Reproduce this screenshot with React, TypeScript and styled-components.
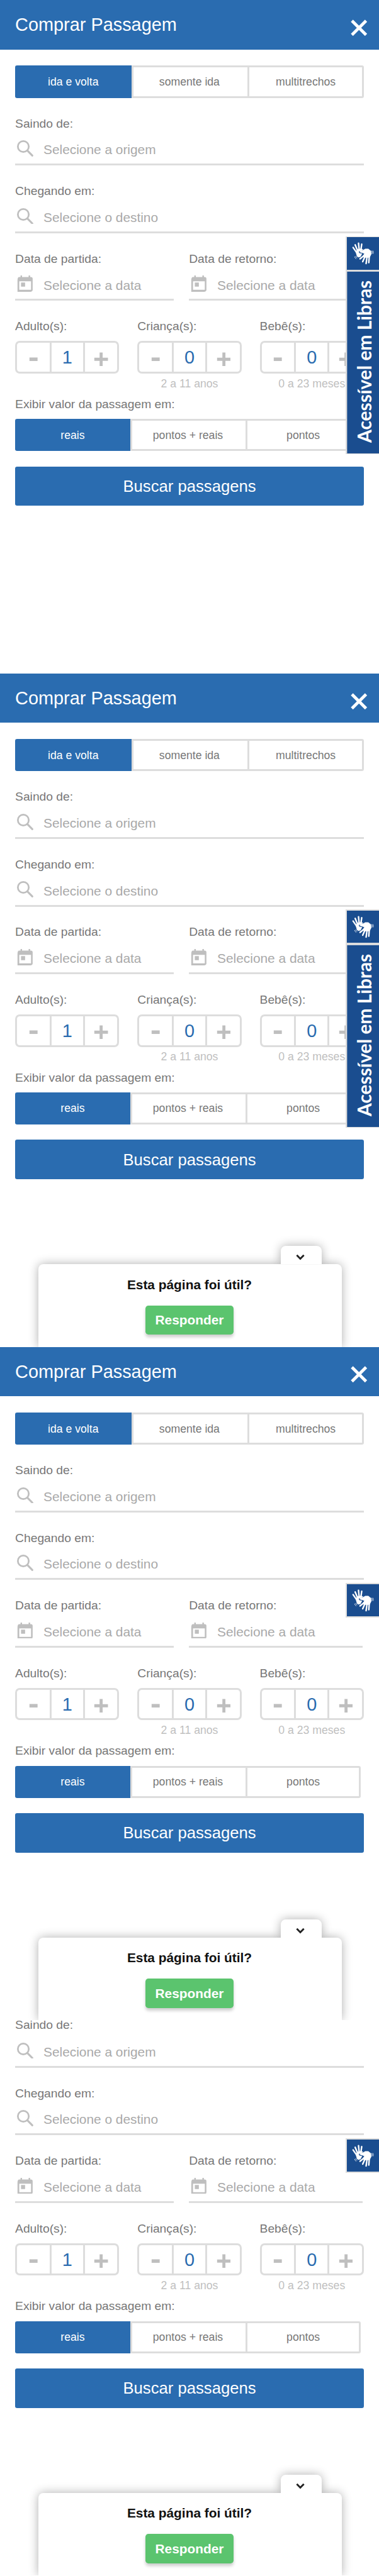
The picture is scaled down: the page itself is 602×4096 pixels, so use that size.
import React from "react";
import styled, { createGlobalStyle } from "styled-components";

const u = (n: number) => `${Math.round(n * 80266.7) / 100000}px`;

const blue = "#2a6cb0";
const navy = "#1a4d8f";
const line = "#dddddd";
const muted = "#bfbfbf";

const GlobalStyle = createGlobalStyle`
  *, *::before, *::after { box-sizing: border-box; }
  body { margin: 0; background: #fff; font-family: "Liberation Sans", Arial, sans-serif; }
  button { font-family: inherit; padding: 0; margin: 0; }
`;

const Page = styled.main`
  width: 602px;
  height: 4096px;
  overflow: hidden;
  display: flex;
  flex-direction: column;
`;

const Screen = styled.section<{ $height: number }>`
  position: relative;
  flex: none;
  width: 100%;
  height: ${(p) => u(p.$height)};
  overflow: hidden;
  background: #fff;
`;

const Header = styled.header`
  height: ${u(98)};
  background: ${blue};
  display: flex;
  align-items: center;
  justify-content: space-between;
  padding: 0 ${u(23)} 0 ${u(30)};
`;

const Title = styled.h1`
  margin: ${u(2)} 0 0;
  color: #fff;
  font-size: ${u(36)};
  font-weight: 400;
  line-height: ${u(42)};
`;

const CloseButton = styled.button`
  margin-top: ${u(12)};
  width: ${u(33)};
  height: ${u(33)};
  border: 0;
  background: none;
  svg { display: block; width: 100%; height: 100%; }
`;

const Form = styled.form<{ $scrolled: boolean }>`
  padding: ${(p) => (p.$scrolled ? "0" : u(32))} ${u(30)} 0;
  display: flex;
  flex-direction: column;
`;

const Segments = styled.div<{ $width: number; $gap: number }>`
  display: grid;
  grid-template-columns: repeat(3, 1fr);
  width: ${(p) => u(p.$width)};
  height: ${u(64)};
  margin-top: ${(p) => u(p.$gap)};
`;

const Segment = styled.button<{ $active?: boolean }>`
  height: 100%;
  padding: 1px ${u(4)} 0 0;
  border: solid ${line};
  border-width: ${u(4)} 0 ${u(4)} ${u(4)};
  background: #fff;
  color: #777;
  font-size: ${u(22)};
  &:last-child {
    padding-right: 0;
    border-right-width: ${u(4)};
    border-radius: 0 ${u(4)} ${u(4)} 0;
  }
  ${(p) =>
    p.$active &&
    `border-color: ${blue}; background: ${blue}; color: #fff; border-radius: ${u(4)} 0 0 ${u(4)};`}
`;

const Label = styled.label<{ $gap?: number; $tight?: boolean }>`
  display: block;
  margin-top: ${(p) => u(p.$gap ?? 36)};
  height: ${(p) => u(p.$tight ? 24 : 28)};
  line-height: ${(p) => u(p.$tight ? 21 : 29)};
  font-size: ${u(24)};
  color: #777;
  white-space: nowrap;
`;

const Field = styled.div`
  height: ${u(70)};
  padding: ${u(12)} 0 0 ${u(4)};
  border-bottom: ${u(4)} solid ${line};
  display: flex;
  align-items: center;
  gap: ${u(20)};
  color: #a9a9a9;
  font-size: ${u(26)};
  svg {
    flex: none;
    width: ${u(32)};
    height: ${u(32)};
    margin-bottom: ${u(6)};
  }
`;

const DateRow = styled.div`
  display: grid;
  grid-template-columns: ${u(314)} ${u(344)};
  column-gap: ${u(30)};
`;

const CounterRow = styled.div`
  display: flex;
  justify-content: space-between;
  height: ${u(178)};
`;

const CounterGroup = styled.div`
  width: ${u(206)};
`;

const Counter = styled.div`
  margin-top: ${u(16)};
  height: ${u(64)};
  border: ${u(4)} solid ${line};
  border-radius: ${u(9)};
  display: grid;
  grid-template-columns: 1fr ${u(70)} 1fr;
`;

const StepButton = styled.button`
  border: 0;
  background: none;
  display: flex;
  align-items: center;
  justify-content: center;
  padding-top: ${u(5)};
  svg { width: ${u(28)}; height: ${u(28)}; display: block; }
`;

const Count = styled.output`
  border: solid ${line};
  border-width: 0 ${u(4)};
  color: ${blue};
  font-size: ${u(36)};
  line-height: ${u(58)};
  text-align: center;
`;

const AgeNote = styled.div`
  margin-top: ${u(6)};
  height: ${u(28)};
  line-height: ${u(29)};
  font-size: ${u(22)};
  color: ${muted};
  text-align: center;
`;

const SearchButton = styled.button`
  margin-top: ${u(30)};
  padding-top: 1px;
  height: ${u(78)};
  border: 0;
  border-radius: ${u(4)};
  background: ${blue};
  color: #fff;
  font-size: ${u(32)};
`;

const Libras = styled.aside<{ $top: number }>`
  position: absolute;
  right: 0;
  top: ${(p) => u(p.$top)};
  width: ${u(66)};
  padding: ${u(2)} 0 ${u(2)} ${u(2)};
  background: ${line};
  display: flex;
  flex-direction: column;
  gap: ${u(4)};
`;

const LibrasIcon = styled.div`
  height: ${u(64)};
  background: ${navy};
  svg { display: block; width: ${u(64)}; height: ${u(64)}; }
`;

const LibrasText = styled.div`
  height: ${u(360)};
  padding-top: ${u(5)};
  background: ${navy};
  color: #fff;
  font-family: Lato, "Open Sans", sans-serif;
  font-weight: 700;
  font-size: ${u(37.3)};
  line-height: ${u(68)};
  writing-mode: vertical-rl;
  transform: rotate(180deg);
  text-align: center;
  white-space: nowrap;
`;

const Feedback = styled.aside`
  position: absolute;
  left: ${u(76)};
  bottom: 0;
  width: ${u(600)};
  height: ${u(164)};
  border-radius: ${u(10)} ${u(10)} 0 0;
  background: #fff;
  box-shadow: 0 0 ${u(20)} rgba(0, 0, 0, 0.32);
  display: flex;
  flex-direction: column;
  align-items: center;
`;

const FeedbackToggle = styled.button`
  position: absolute;
  right: ${u(40)};
  top: ${u(-36)};
  width: ${u(80)};
  height: ${u(36.5)};
  border: 0;
  border-radius: ${u(10)} ${u(10)} 0 0;
  background: #fff;
  box-shadow: 0 0 ${u(20)} rgba(0, 0, 0, 0.32);
  clip-path: inset(-30px -30px 0 -30px);
  display: flex;
  justify-content: center;
  padding-top: ${u(15)};
  svg { width: ${u(20)}; height: ${u(16)}; margin-right: ${u(4)}; }
`;

const Question = styled.p`
  margin: ${u(26)} ${u(2)} 0 0;
  height: ${u(30)};
  line-height: ${u(31)};
  font-size: ${u(26)};
  font-weight: 700;
  color: #111;
`;

const AnswerButton = styled.button`
  margin: ${u(26)} ${u(2)} 0 0;
  width: ${u(174)};
  height: ${u(58)};
  border: 0;
  border-radius: ${u(6)};
  background: #5bc46e;
  color: #fff;
  font-size: ${u(26)};
  font-weight: 700;
  box-shadow: 0 ${u(4)} ${u(6)} rgba(0, 0, 0, 0.2);
`;

const SearchIcon = () => (
  <svg viewBox="0 0 32 32" fill="none" stroke={muted}>
    <circle cx="12.5" cy="12.5" r="10.8" strokeWidth="3.4" />
    <path d="M20.5 20.5 30.3 30.3" strokeWidth="3.8" strokeLinecap="round" />
  </svg>
);

const CalendarIcon = () => (
  <svg viewBox="0 0 32 32" fill={muted}>
    <path
      fillRule="evenodd"
      d="M7 0h3v3h13V0h3v3h1.500q3.500 0 3.500 3.500v22q0 3.500-3.500 3.500l0 3H4.500q-3.500 0-3.500-3.500v-22Q1 3 4.500 3H7zM4.500 11.500v17h23.300v-17zM8 14h8v8H8z"
    />
  </svg>
);

const Hands = () => (
  <svg viewBox="-12 -12 192 192" fill="none" stroke="#fff" strokeLinecap="round" strokeLinejoin="round">
    <path d="M25 50 46 80M37 34 53 72M57 24 61 66M76 30 71 66" strokeWidth="9" />
    <path fill="#fff" strokeWidth="4" d="M42 76 52 62 72 58 82 62 68 66 58 72 57 79 63 85 76 87 68 103 57 107 49 101Z" />
    <path fill="#fff" strokeWidth="4" d="M66 72 84 67 98 59 114 59 130 72 131 90 122 108 90 108 84 100 94 86 80 80 67 77Z" />
    <path d="M90 98 66 117M96 102 82 134M108 104 102 145M121 98 118 140" strokeWidth="9" />
    <path d="M136 70Q140 78 137 86M143 70Q147 78 144 86M34 105Q36 112 42 117M41 102Q42 108 48 112" strokeWidth="3" />
  </svg>
);

type SegmentedProps = { options: string[]; width?: number; gap?: number };

function Segmented({ options, width = 690, gap = 0 }: SegmentedProps) {
  return (
    <Segments $width={width} $gap={gap}>
      {options.map((o, i) => (
        <Segment key={o} type="button" $active={i === 0}>
          {o}
        </Segment>
      ))}
    </Segments>
  );
}

function Passengers({ label, count, note }: { label: string; count: number; note?: string }) {
  return (
    <CounterGroup>
      <Label>{label}</Label>
      <Counter>
        <StepButton type="button" aria-label="Diminuir">
          <svg viewBox="0 0 28 28" fill={muted}>
            <path d="M6 10.500h16v7H6z" />
          </svg>
        </StepButton>
        <Count>{count}</Count>
        <StepButton type="button" aria-label="Aumentar">
          <svg viewBox="0 0 28 28" fill={muted}>
            <path d="M11.500.500h6v10.500H28v6H17.500v10.500h-6V17H1v-6h10.500z" />
          </svg>
        </StepButton>
      </Counter>
      {note && <AgeNote>{note}</AgeNote>}
    </CounterGroup>
  );
}

type BookingProps = {
  height?: number;
  scrolled?: boolean;
  librasTop?: number;
  librasOpen?: boolean;
  feedback?: boolean;
};

function Booking({
  height = 1334,
  scrolled = false,
  librasTop = 468,
  librasOpen = false,
  feedback = false,
}: BookingProps) {
  return (
    <Screen $height={height}>
      {!scrolled && (
        <Header>
          <Title>Comprar Passagem</Title>
          <CloseButton aria-label="Fechar">
            <svg viewBox="0 0 33 33" stroke="#fff" strokeWidth="6">
              <path d="M2.500 2.500 30.500 30.500M30.500 2.500 2.500 30.500" />
            </svg>
          </CloseButton>
        </Header>
      )}
      <Form $scrolled={scrolled}>
        {!scrolled && <Segmented options={["ida e volta", "somente ida", "multitrechos"]} />}
        <Label $gap={scrolled ? 0 : 36} $tight={scrolled}>
          Saindo de:
        </Label>
        <Field>
          <SearchIcon />
          Selecione a origem
        </Field>
        <Label>Chegando em:</Label>
        <Field>
          <SearchIcon />
          Selecione o destino
        </Field>
        <DateRow>
          {["Data de partida:", "Data de retorno:"].map((label) => (
            <div key={label}>
              <Label>{label}</Label>
              <Field>
                <CalendarIcon />
                Selecione a data
              </Field>
            </div>
          ))}
        </DateRow>
        <CounterRow>
          <Passengers label="Adulto(s):" count={1} />
          <Passengers label="Criança(s):" count={0} note="2 a 11 anos" />
          <Passengers label="Bebê(s):" count={0} note="0 a 23 meses" />
        </CounterRow>
        <Label $gap={12}>Exibir valor da passagem em:</Label>
        <Segmented options={["reais", "pontos + reais", "pontos"]} width={684} gap={16} />
        <SearchButton type="button">Buscar passagens</SearchButton>
      </Form>
      <Libras $top={librasTop}>
        <LibrasIcon>
          <Hands />
        </LibrasIcon>
        {librasOpen && <LibrasText>Acessível em Libras</LibrasText>}
      </Libras>
      {feedback && (
        <Feedback>
          <FeedbackToggle aria-label="Minimizar">
            <svg viewBox="0 0 20 16" fill="none" stroke="#222" strokeWidth="3.600">
              <path d="M3 3.500 10 10.500 17 3.500" />
            </svg>
          </FeedbackToggle>
          <Question>Esta página foi útil?</Question>
          <AnswerButton>Responder</AnswerButton>
        </Feedback>
      )}
    </Screen>
  );
}

export default function App() {
  return (
    <Page>
      <GlobalStyle />
      <Booking librasOpen />
      <Booking librasOpen feedback />
      <Booking feedback />
      <Booking height={1100} scrolled librasTop={234} feedback />
    </Page>
  );
}
